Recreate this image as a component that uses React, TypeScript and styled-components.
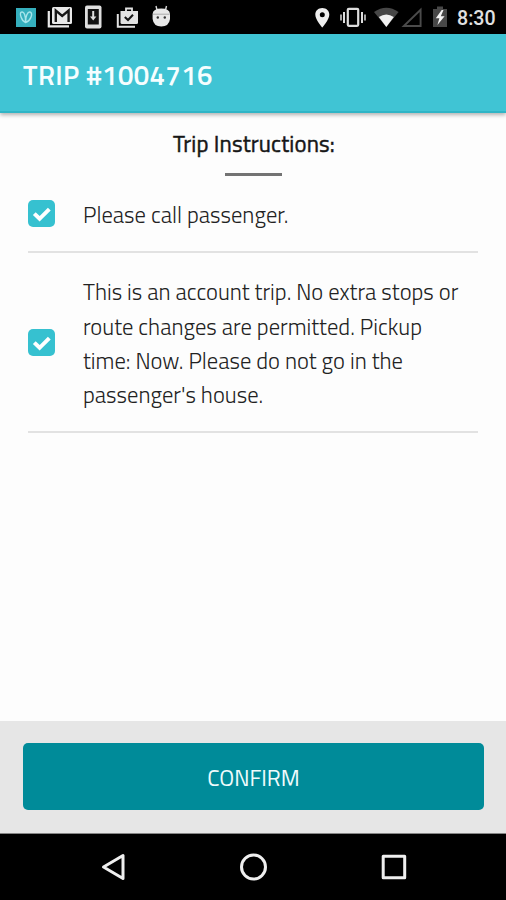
import React from "react";
import styled, { createGlobalStyle } from "styled-components";

const GlobalStyle = createGlobalStyle`
  * { box-sizing: border-box; }
  body { margin: 0; background: #fdfdfd; }
`;

const Screen = styled.div`
  width: 506px;
  height: 900px;
  display: flex;
  flex-direction: column;
  overflow: hidden;
  background: #fdfdfd;
  font-family: "Titillium Web", Roboto, sans-serif;
`;

const StatusBar = styled.div`
  height: 34px;
  flex: none;
  display: flex;
  align-items: flex-start;
  background: #000;
`;

const StatusIcon = styled.svg<{ $before: number }>`
  display: block;
  flex: none;
  margin-left: ${(p) => p.$before}px;
`;

const Clock = styled.span`
  margin-left: 9px;
  font: 500 19.6px/37px Roboto, sans-serif;
  color: #e0e0e0;
`;

const Header = styled.header`
  height: 79px;
  flex: none;
  display: flex;
  align-items: center;
  padding: 4px 23px 0;
  background: #40c4d4;
  border-bottom: 2px solid #2fb5c6;
  box-shadow: 0 2px 4px rgba(0, 0, 0, 0.3);
  z-index: 1;
`;

const Title = styled.h1`
  margin: 0;
  font-size: 27.5px;
  font-weight: 600;
  letter-spacing: 0.42px;
  color: #f6feff;
`;

const Content = styled.main`
  flex: 1;
  padding: 0 28px;
`;

const Heading = styled.h2`
  margin: 15px 0 0;
  font-size: 22.8px;
  font-weight: 400;
  -webkit-text-stroke: 0.45px #161616;
  line-height: 31px;
  text-align: center;
  color: #161616;
  letter-spacing: 0.15px;
  padding-left: 2px;
`;

const HeadingRule = styled.div`
  width: 57px;
  height: 3px;
  margin: 14px auto 0;
  background: #737373;
`;

const Instruction = styled.label<{ $height: number }>`
  height: ${(p) => p.$height}px;
  display: flex;
  align-items: center;
  gap: 28px;
  border-bottom: 2px solid #e2e2e2;
`;

const CheckBox = styled.span`
  width: 27px;
  height: 27px;
  flex: none;
  display: flex;
  align-items: center;
  justify-content: center;
  border-radius: 5px;
  background: #36c1d0;
`;

const Copy = styled.div`
  font-size: 22.6px;
  font-weight: 300;
  line-height: 34.3px;
  color: #222;
  padding-top: 4px;
`;

const Line = styled.span`
  display: block;
  white-space: nowrap;
`;

const Footer = styled.footer`
  height: 113px;
  flex: none;
  padding: 22px 22px 0 23px;
  background: #e6e6e6;
  border-bottom: 1px solid #858585;
`;

const ConfirmButton = styled.button`
  display: block;
  width: 100%;
  height: 67px;
  padding: 1px 0 0;
  border: 0;
  border-radius: 5px;
  background: #008b99;
  color: #effbfc;
  font-family: inherit;
  font-size: 22.6px;
  font-weight: 400;
  letter-spacing: 0;
`;

const NavBar = styled.nav`
  height: 66px;
  flex: none;
  display: flex;
  align-items: center;
  justify-content: center;
  gap: 112px;
  background: #000;
`;

const NavIcon = styled.svg`
  display: block;
  fill: none;
  stroke: #efefef;
  stroke-width: 3;
  stroke-linejoin: round;
`;

const Check = () => (
  <CheckBox>
    <svg width="27" height="27" viewBox="0 0 27 27">
      <path d="M6.3 13.6 L11.6 18.8 L21.3 9.2" fill="none" stroke="#fff" strokeWidth="4" />
    </svg>
  </CheckBox>
);

const items = [
  { height: 77, lines: ["Please call passenger."] },
  {
    height: 180,
    lines: [
      "This is an account trip. No extra stops or",
      "route changes are permitted. Pickup",
      "time: Now. Please do not go in the",
      "passenger's house.",
    ],
  },
];

export default function App() {
  return (
    <>
      <GlobalStyle />
      <Screen>
        <StatusBar>
          <StatusIcon $before={16} width="20" height="34">
            <rect y="8" width="20" height="19" fill="#35afbd" />
            <path d="M9.6 22.5C5.5 21 3.2 13.5 5.3 12.2C8.4 11 9.8 17 9.6 22.5C9.3 17 11.6 11 14.4 12.2C17.4 14 14 21.5 9.6 22.5Z" fill="none" stroke="#a7e5eb" strokeWidth="1.4" />
          </StatusIcon>
          <StatusIcon $before={11} width="26" height="34">
            <path d="M1.8 11V26.4H22" fill="none" stroke="#e8e8e8" strokeWidth="2.2" />
            <rect x="5" y="7" width="20" height="17" rx="1.5" fill="#e8e8e8" />
            <path d="M8.8 22V10.5L15.2 16L21.6 10.5V22" fill="none" stroke="#161616" strokeWidth="2.4" />
          </StatusIcon>
          <StatusIcon $before={12} width="17" height="34">
            <rect y="5.5" width="16.5" height="23" rx="2" fill="#dedede" />
            <rect x="2.8" y="9" width="11" height="15.5" fill="#111" />
            <path d="M8.2 11V18" stroke="#dedede" strokeWidth="2" />
            <path d="M5 16.5H11.4L8.2 20.5Z" fill="#dedede" />
          </StatusIcon>
          <StatusIcon $before={14} width="23" height="34">
            <path d="M1.8 14V26.8H19" fill="none" stroke="#e2e2e2" strokeWidth="2" />
            <path d="M10 11V8.5H16V11" fill="none" stroke="#e2e2e2" strokeWidth="1.8" />
            <path d="M4.5 11H22V22.5Q22 24 20.5 24H6Q4.5 24 4.5 22.5Z" fill="#e2e2e2" />
            <path d="M8.8 17L12 20L17 14.7" fill="none" stroke="#151515" strokeWidth="2" />
          </StatusIcon>
          <StatusIcon $before={13} width="19" height="34">
            <path d="M4 6L5 10M14.5 6L13.5 10" stroke="#d8d8d8" strokeWidth="1.4" />
            <path d="M.6 14Q1 8.5 9.3 8.5T18 14V19Q17 26.5 9.3 26.5T.6 19Z" fill="#e8e8e8" />
            <path d="M1 14.2H17.6" stroke="#aaa" strokeWidth="1" />
            <circle cx="5.8" cy="17.5" r="1.2" fill="#333" />
            <circle cx="12.8" cy="17.5" r="1.2" fill="#333" />
          </StatusIcon>
          <StatusIcon $before={144} width="15" height="34">
            <path fillRule="evenodd" d="M7.3 8C3.2 8 .3 10.8 .3 14.7C.3 19.5 7.3 27.5 7.3 27.5S14.3 19.5 14.3 14.7C14.3 10.8 11.4 8 7.3 8ZM7.3 12.2A2.5 2.5 0 1 1 7.3 17.2A2.5 2.5 0 1 1 7.3 12.2Z" fill="#eee" />
          </StatusIcon>
          <StatusIcon $before={10} width="26" height="34">
            <rect x="7.8" y="8.8" width="10.4" height="17" rx="1" fill="none" stroke="#ddd" strokeWidth="2.2" />
            <path d="M4 12V23M22 12V23" stroke="#ddd" strokeWidth="2" />
            <path d="M1 14.5V20.5M25 14.5V20.5" stroke="#ccc" strokeWidth="1.6" />
          </StatusIcon>
          <StatusIcon $before={8} width="25" height="34">
            <path d="M0 12Q12.3 3.5 24.6 12L12.3 27Z" fill="#474747" />
            <path d="M4.8 17Q12.3 12 19.8 17L12.3 27Z" fill="#f2f2f2" />
          </StatusIcon>
          <StatusIcon $before={2} width="22" height="34">
            <path d="M2.8 26H19.6V9.8Z" fill="none" stroke="#4b4b4b" strokeWidth="1.9" />
          </StatusIcon>
          <StatusIcon $before={10} width="15" height="34">
            <path d="M0 9H4V6.5H10V9H14V27H0Z" fill="#484848" />
            <path d="M8.7 10L2.8 18.2H6.4L4.4 25L11.6 16.2H7.8L10.5 10Z" fill="#f5f5f5" />
          </StatusIcon>
          <Clock>8:30</Clock>
        </StatusBar>
        <Header>
          <Title>TRIP #1004716</Title>
        </Header>
        <Content>
          <Heading>Trip Instructions:</Heading>
          <HeadingRule />
          {items.map((item) => (
            <Instruction key={item.height} $height={item.height}>
              <Check />
              <Copy>
                {item.lines.map((line) => (
                  <Line key={line}>{line}</Line>
                ))}
              </Copy>
            </Instruction>
          ))}
        </Content>
        <Footer>
          <ConfirmButton>CONFIRM</ConfirmButton>
        </Footer>
        <NavBar>
          <NavIcon width="28" height="30">
            <path d="M24 3.5V26.5L4.5 15Z" />
          </NavIcon>
          <NavIcon width="29" height="30">
            <circle cx="14.5" cy="15" r="12" />
          </NavIcon>
          <NavIcon width="28" height="30">
            <rect x="3.2" y="4.2" width="21.5" height="21.5" />
          </NavIcon>
        </NavBar>
      </Screen>
    </>
  );
}
